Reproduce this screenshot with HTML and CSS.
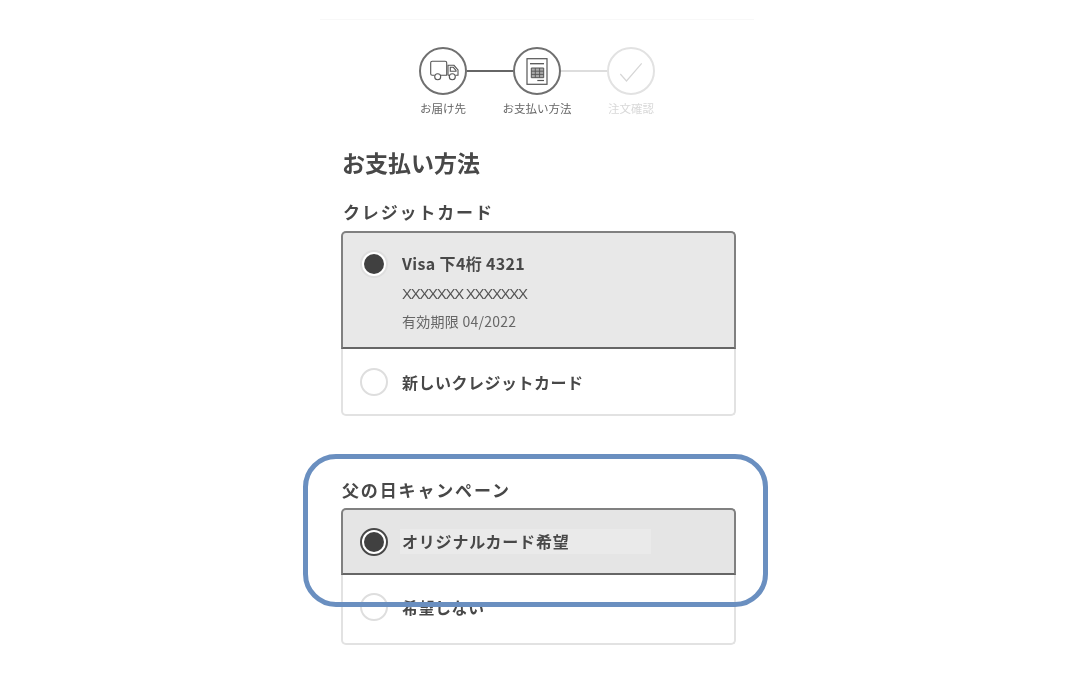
FILE: index.html
```html
<!DOCTYPE html>
<html lang="ja">
<head>
<meta charset="utf-8">
<title>お支払い方法</title>
<link rel="stylesheet" href="styles.css">
</head>
<body>
<main class="phone">
  <div class="stepper">
    <div class="circles">
      <span class="circle">
        <svg viewBox="0 0 48 48" class="icon" fill="none" stroke="#555" stroke-width="1.1">
          <path d="M15.600 28.300h-2.400a1.500 1.500 0 0 1-1.500-1.500V15.800a1.500 1.500 0 0 1 1.500-1.500h13a1.500 1.500 0 0 1 1.500 1.500v12.500h-6.300"/>
          <path d="M29 28.300V18.300h6l4 4.700v5.300h-2.500M30.200 28.300H29"/>
          <path d="M31.300 20.300h3l2.700 3.200v.8h-5.700z"/>
          <circle cx="18.700" cy="29.800" r="3"/>
          <circle cx="33.300" cy="29.800" r="3"/>
        </svg>
      </span>
      <span class="line"></span>
      <span class="circle">
        <svg viewBox="0 0 48 48" class="icon" fill="none" stroke="#555">
          <rect x="14" y="11.700" width="20" height="25.600" stroke-width="1.200"/>
          <path d="M17 16.700h14" stroke-width="1.300"/>
          <path d="M18.300 21h12.400v9.700H18.300z" fill="#aaa" stroke-width="1"/>
          <path d="M18.300 24.200h12.400M18.300 27.400h12.400M22.300 21v9.700M26.600 21v9.700" stroke-width=".9"/>
          <path d="M24.300 33.500H31" stroke-width="1.200"/>
        </svg>
      </span>
      <span class="line line-off"></span>
      <span class="circle circle-off">
        <svg viewBox="0 0 48 48" class="icon" fill="none" stroke="#d6d6d6" stroke-width="1.200">
          <path d="M13.300 27l6.200 7L34.700 16.300"/>
        </svg>
      </span>
    </div>
    <div class="labels">
      <span>お届け先</span>
      <span>お支払い方法</span>
      <span class="label-off">注文確認</span>
    </div>
  </div>

  <h1 class="title">お支払い方法</h1>

  <h2 class="heading heading-card">クレジットカード</h2>
  <div class="options">
    <div class="option selected card-row">
      <span class="radio radio-on"></span>
      <div class="card-info">
        <div class="name name-card">Visa 下4桁 4321</div>
        <div class="holder">XXXXXXX XXXXXXX</div>
        <div class="expiry">有効期限 04/2022</div>
      </div>
    </div>
    <div class="option plain">
      <span class="radio"></span>
      <div class="name">新しいクレジットカード</div>
    </div>
  </div>

  <h2 class="heading heading-campaign">父の日キャンペーン</h2>
  <div class="options">
    <div class="option selected single">
      <span class="radio radio-strong"></span>
      <div class="name patch">オリジナルカード希望</div>
    </div>
    <div class="option plain tall">
      <span class="radio"></span>
      <div class="name">希望しない</div>
    </div>
  </div>
</main>
<div class="highlight"></div>
</body>
</html>
```
FILE: styles.css
```css
* { box-sizing: border-box; }
html, body { margin: 0; background: #fff; }
body {
  font-family: "Noto Sans CJK JP", "Noto Sans", sans-serif;
  color: #454545;
  overflow: hidden;
  height: 682px;
}
.phone {
  width: 434px;
  margin: 19px 0 0 320px;
  padding: 27px 19px 0 21px;
  border-top: 1px solid #f8f8f8;
  filter: blur(.4px);
}
.stepper { margin-left: -21px; margin-right: -19px; }
.circles { display: flex; justify-content: center; align-items: center; }
.circle {
  width: 48px;
  height: 48px;
  border: 2px solid #707070;
  border-radius: 50%;
  flex: none;
  position: relative;
  display: block;
}
.circle-off { border-color: #e2e2e2; }
.icon { position: absolute; inset: -2px; width: 48px; height: 48px; }
.line { width: 46px; height: 2px; background: #666; flex: none; }
.line-off { background: #ddd; }
.labels {
  display: grid;
  grid-template-columns: repeat(3, 94px);
  justify-content: center;
  margin-top: 5px;
  font-size: 11.5px;
  line-height: 16px;
  text-align: center;
  color: #666;
}
.label-off { color: #d9d9d9; }
.title {
  margin: 31px 0 0 1px;
  font-size: 23px;
  line-height: 30px;
  font-weight: 700;
  color: #484848;
}
.heading {
  margin: 0 0 0 1px;
  font-size: 17px;
  line-height: 24px;
  font-weight: 700;
  letter-spacing: 1.85px;
  color: #484848;
}
.heading-card { margin-top: 23px; margin-left: 2px; margin-bottom: 7px; }
.heading-campaign { margin-top: 62px; margin-bottom: 6px; }
.options { width: 395px; }
.option {
  display: flex;
  gap: 14px;
  padding: 0 17px;
  border: 2px solid #808080;
}
.selected {
  background: #e8e8e8;
  border-radius: 5px 5px 0 0;
  border-bottom-color: #666;
}
.card-row { padding-top: 17px; padding-bottom: 16px; align-items: flex-start; }
.single { height: 67px; align-items: center; background: #e5e5e5; }
.plain {
  align-items: center;
  background: #fff;
  border-color: #e2e2e2;
  border-top: 0;
  border-radius: 0 0 5px 5px;
  padding-top: 19px;
  padding-bottom: 18px;
}
.tall { padding-top: 18px; padding-bottom: 22px; }
.radio {
  width: 28px;
  height: 28px;
  flex: none;
  border: 2px solid #dedede;
  border-radius: 50%;
  background: #fff;
  display: flex;
  align-items: center;
  justify-content: center;
}
.radio-on::before, .radio-strong::before {
  content: "";
  display: block;
  width: 20px;
  height: 20px;
  border-radius: 50%;
  background: #404040;
}
.radio-strong { border-color: #484848; }
.card-info { padding-top: 1px; }
.name {
  font-size: 16px;
  line-height: 24px;
  font-weight: 700;
  letter-spacing: .5px;
  color: #484848;
}
.name-card { letter-spacing: .35px; }
.holder {
  margin-top: 9px;
  font-family: "Liberation Sans", sans-serif;
  font-size: 15px;
  line-height: 20px;
  letter-spacing: -1.3px;
  color: #555;
}
.expiry {
  margin-top: 7px;
  font-size: 14px;
  line-height: 20px;
  letter-spacing: .25px;
  color: #666;
}
.patch {
  width: 251px;
  margin-left: -2px;
  padding-left: 2px;
  line-height: 25px;
  letter-spacing: .8px;
  background: #eaeaea;
}
.highlight {
  position: absolute;
  left: 303px;
  top: 454px;
  width: 465px;
  height: 153px;
  border: 5px solid #6a8fc0;
  border-radius: 33px;
}
```
